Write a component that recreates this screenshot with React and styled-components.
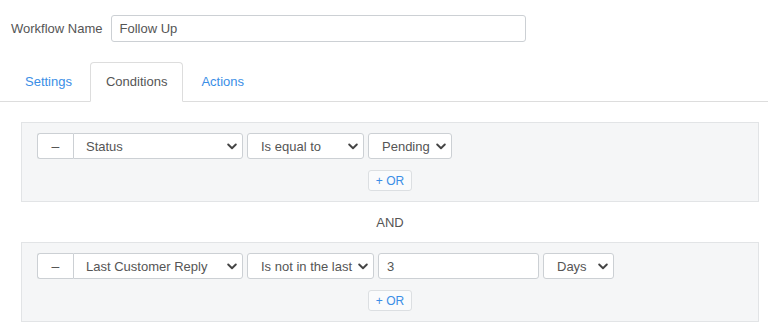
import React from "react";
import styled, { createGlobalStyle } from "styled-components";

const Global = createGlobalStyle`
  html, body { margin: 0; padding: 0; background: #fff; }
  body { font-family: "Liberation Sans", Arial, sans-serif; font-size: 13px; color: #555; }
`;

const Page = styled.div`
  width: 768px;
  padding: 15px 9px 0 0;
  box-sizing: border-box;
`;

const NameRow = styled.div`
  display: flex;
  align-items: center;
  gap: 8px;
  padding-left: 11px;
`;

const Label = styled.label`
  font-size: 13px;
  color: #555;
`;

const TextInput = styled.div`
  box-sizing: border-box;
  width: ${(p) => p.$w}px;
  height: ${(p) => p.$h || 27}px;
  border: 1px solid #ccd0d4;
  border-radius: 3px;
  background: #fff;
  padding: 0 8px;
  display: flex;
  align-items: center;
  color: #555;
  font-size: 13px;
`;

const Tabs = styled.div`
  display: flex;
  margin-top: 20px;
  padding-left: 9px;
  border-bottom: 1px solid #ddd;
  margin-right: -9px;
`;

const Tab = styled.div`
  padding: 10px 15px;
  line-height: 18px;
  margin-right: 2px;
  margin-bottom: -1px;
  border: 1px solid ${(p) => (p.$active ? "#ddd" : "transparent")};
  border-bottom-color: ${(p) => (p.$active ? "#fff" : "transparent")};
  border-radius: 4px 4px 0 0;
  background: ${(p) => (p.$active ? "#fff" : "transparent")};
  color: ${(p) => (p.$active ? "#555" : "#3a8ee6")};
  font-size: 13px;
`;

const Body = styled.div`
  padding: 20px 0 0 21px;
  display: flex;
  flex-direction: column;
`;

const Panel = styled.div`
  background: #f5f6f7;
  border: 1px solid #e2e4e6;
  padding: 10px 0 10px 15px;
  display: flex;
  flex-direction: column;
  align-items: stretch;
  gap: 11px;
`;

const Row = styled.div`
  display: flex;
  gap: 4px;
  height: 26px;
`;

const Group = styled.div`
  display: flex;
`;

const MinusBtn = styled.div`
  box-sizing: border-box;
  width: 36px;
  height: 26px;
  border: 1px solid #ccd0d4;
  border-right: none;
  border-radius: 3px 0 0 3px;
  background: #fff;
  display: flex;
  align-items: center;
  justify-content: center;
  color: #555;
  font-size: 14px;
`;

const SelectBox = styled.div`
  box-sizing: border-box;
  width: ${(p) => p.$w}px;
  height: 26px;
  border: 1px solid #ccd0d4;
  border-radius: ${(p) => (p.$joined ? "0 3px 3px 0" : "3px")};
  background: #fff;
  display: flex;
  align-items: center;
  justify-content: space-between;
  padding: 0 5px 0 ${(p) => (p.$joined ? 12 : 13)}px;
  color: #555;
  font-size: 13px;
  white-space: nowrap;
`;

const Chevron = () => (
  <svg width="10" height="7" viewBox="0 0 10 7">
    <path d="M1.2 1.5 L5 5.2 L8.8 1.5" fill="none" stroke="#444" strokeWidth="1.9" strokeLinecap="round" strokeLinejoin="round" />
  </svg>
);

const Select = ({ w, joined, children }) => (
  <SelectBox $w={w} $joined={joined}>
    <span>{children}</span>
    <Chevron />
  </SelectBox>
);

const OrBtn = styled.div`
  align-self: center;
  box-sizing: border-box;
  width: 44px;
  height: 21px;
  margin-left: -15px;
  border: 1px solid #dcdfe2;
  border-radius: 3px;
  background: #fafbfc;
  color: #3a8ee6;
  font-size: 12px;
  display: flex;
  align-items: center;
  justify-content: center;
`;

const And = styled.div`
  height: 40px;
  display: flex;
  align-items: center;
  justify-content: center;
  color: #555;
  font-size: 13px;
`;

export default function App() {
  return (
    <>
      <Global />
      <Page>
        <NameRow>
          <Label>Workflow Name</Label>
          <TextInput $w={415}>Follow Up</TextInput>
        </NameRow>
        <Tabs>
          <Tab>Settings</Tab>
          <Tab $active>Conditions</Tab>
          <Tab>Actions</Tab>
        </Tabs>
        <Body>
          <Panel>
            <Row>
              <Group>
                <MinusBtn>–</MinusBtn>
                <Select w={170} joined>Status</Select>
              </Group>
              <Select w={117}>Is equal to</Select>
              <Select w={84}>Pending</Select>
            </Row>
            <OrBtn>+ OR</OrBtn>
          </Panel>
          <And>AND</And>
          <Panel>
            <Row>
              <Group>
                <MinusBtn>–</MinusBtn>
                <Select w={170} joined>Last Customer Reply</Select>
              </Group>
              <Select w={127}>Is not in the last</Select>
              <TextInput $w={161} $h={26}>3</TextInput>
              <Select w={71}>Days</Select>
            </Row>
            <OrBtn>+ OR</OrBtn>
          </Panel>
        </Body>
      </Page>
    </>
  );
}
